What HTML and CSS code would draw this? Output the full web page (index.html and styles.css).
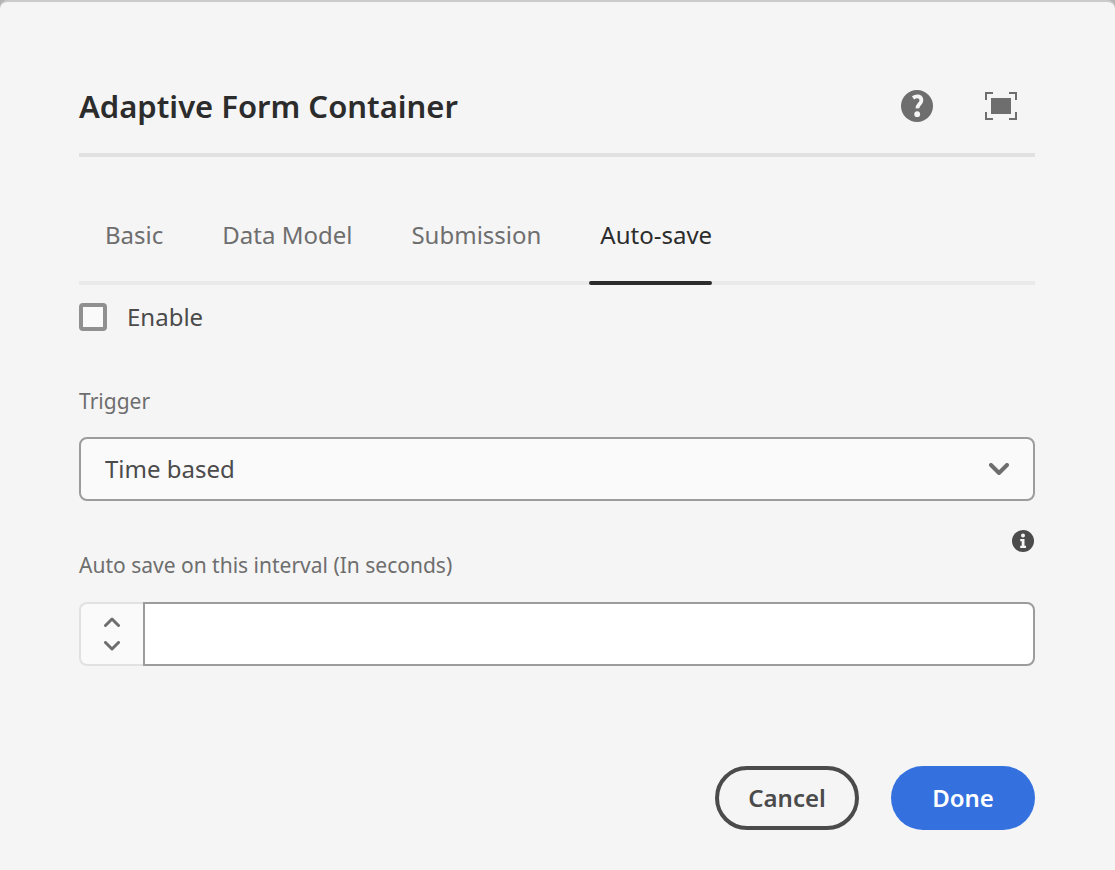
FILE: index.html
```html
<!DOCTYPE html>
<html lang="en">
<head>
<meta charset="utf-8">
<title>Adaptive Form Container</title>
<link rel="stylesheet" href="styles.css">
</head>
<body>
<form class="dialog">
  <header class="header">
    <h1 class="title">Adaptive Form Container</h1>
    <div class="actions">
      <button type="button" class="icon-button" aria-label="Help">
        <svg width="32" height="32" viewBox="0 0 32 32"><circle cx="16" cy="16" r="16" fill="#6e6e6e"/><path d="M12 7.800C13.200 7 14.600 6.400 16.200 6.400c2.900 0 4.200 1.600 4.200 3.800 0 1.900-1 3.100-2.300 4.300-1.300 1.300-1.700 2.200-1.600 3.900" fill="none" stroke="#f5f5f5" stroke-width="3.800"/><circle cx="16.200" cy="24.200" r="2.900" fill="#f5f5f5"/></svg>
      </button>
      <button type="button" class="icon-button" aria-label="Toggle fullscreen">
        <svg width="32" height="28" viewBox="0 0 32 28"><path d="M6 6h20v16H6z" fill="#6e6e6e"/><path d="M1 8V1h7M24 1h7v7M31 20v7h-7M8 27H1v-7" fill="none" stroke="#6e6e6e" stroke-width="2"/></svg>
      </button>
    </div>
  </header>

  <div class="tabs" role="tablist">
    <button type="button" class="tab" role="tab" aria-selected="false">Basic</button>
    <button type="button" class="tab" role="tab" aria-selected="false">Data Model</button>
    <button type="button" class="tab" role="tab" aria-selected="false">Submission</button>
    <button type="button" class="tab tab-selected" role="tab" aria-selected="true">Auto-save</button>
  </div>

  <div class="check">
    <input type="checkbox" class="checkbox" id="enable">
    <label for="enable">Enable</label>
  </div>

  <div class="field">
    <label class="label" for="trigger">Trigger</label>
    <div class="select-wrap">
      <select class="select" id="trigger"><option>Time based</option></select>
      <svg class="chevron" width="20" height="12" viewBox="0 0 20 12"><path d="M2 2l8 8 8-8" fill="none" stroke="#6e6e6e" stroke-width="4" stroke-linecap="round" stroke-linejoin="round"/></svg>
    </div>
  </div>

  <div class="field field-interval">
    <div class="label-row">
      <label class="label" for="interval">Auto save on this interval (In seconds)</label>
      <button type="button" class="icon-button" aria-label="More information">
        <svg width="22" height="22" viewBox="0 0 22 22"><circle cx="11" cy="11" r="11" fill="#4b4b4b"/><circle cx="11" cy="5.500" r="2" fill="#f5f5f5"/><path d="M8.200 9h4.300v6.700h1.500V18H8.200v-2.300h1.500v-4.400H8.200z" fill="#f5f5f5"/></svg>
      </button>
    </div>
    <div class="number">
      <div class="stepper">
        <button type="button" class="step" aria-label="Increment"><svg width="16" height="10" viewBox="0 0 16 10"><path d="M1.500 8.500L8 2l6.500 6.500" fill="none" stroke="#6e6e6e" stroke-width="3" stroke-linecap="round" stroke-linejoin="round"/></svg></button>
        <button type="button" class="step" aria-label="Decrement"><svg width="16" height="10" viewBox="0 0 16 10"><path d="M1.500 1.500L8 8l6.500-6.500" fill="none" stroke="#6e6e6e" stroke-width="3" stroke-linecap="round" stroke-linejoin="round"/></svg></button>
      </div>
      <input type="text" inputmode="numeric" class="number-input" id="interval">
    </div>
  </div>

  <footer class="footer">
    <button type="button" class="button button-secondary">Cancel</button>
    <button type="button" class="button button-primary">Done</button>
  </footer>
</form>
</body>
</html>
```
FILE: styles.css
```css
* { box-sizing: border-box; }

body {
  margin: 0;
  background: #b4b4b4;
  color: #4b4b4b;
  font: 24px/32px "Noto Sans", sans-serif;
}

button, input, select { font: inherit; color: inherit; }
button { padding: 0; border: 0; background: none; cursor: pointer; }
svg { display: block; }

.dialog {
  min-height: 100vh;
  padding: 80px 80px 40px 79px;
  border-top: 2px solid #cbcbcb;
  border-radius: 8px 8px 0 0;
  background: #f5f5f5;
}

.header {
  display: flex;
  align-items: center;
  justify-content: space-between;
  height: 75px;
  padding: 0 18px 23px 0;
  border-bottom: 4px solid #e1e1e1;
}
.title {
  margin: 0;
  color: #2c2c2c;
  font-size: 31px;
  line-height: 48px;
  font-weight: 600;
}
.actions { display: flex; align-items: center; gap: 52px; }
.icon-button { flex: none; }

.tabs {
  display: flex;
  gap: 59px;
  height: 128px;
  padding: 31px 26px 0;
  border-bottom: 4px solid #eaeaea;
}
.tab { position: relative; color: #6e6e6e; white-space: nowrap; }
.tab-selected { color: #2c2c2c; }
.tab-selected::after {
  content: "";
  position: absolute;
  right: 0;
  bottom: -4px;
  left: -11px;
  height: 4px;
  border-radius: 2px;
  background: #2c2c2c;
}

.check { display: flex; align-items: center; gap: 20px; margin-top: 16px; }
.checkbox {
  appearance: none;
  width: 28px;
  height: 28px;
  margin: 0;
  border: 4px solid #909090;
  border-radius: 4px;
  background: #fafafa;
}

.field { margin-top: 52px; }
.label { display: block; color: #6e6e6e; font-size: 21px; }
.select-wrap { position: relative; margin-top: 20px; }
.select {
  appearance: none;
  display: block;
  width: 100%;
  height: 64px;
  padding: 0 60px 0 24px;
  border: 2px solid #9c9c9c;
  border-radius: 8px;
  background: #fafafa;
}
.chevron { position: absolute; top: 26px; right: 26px; pointer-events: none; }

.field-interval { margin-top: 29px; }
.label-row { display: flex; align-items: flex-start; justify-content: space-between; padding-right: 1px; }
.label-row .label { padding-top: 19px; }
.number { display: flex; height: 64px; margin-top: 21px; }
.stepper {
  display: flex;
  flex-direction: column;
  align-items: center;
  justify-content: center;
  gap: 14px;
  width: 64px;
  border: 2px solid #e1e1e1;
  border-right: 0;
  border-radius: 8px 0 0 8px;
  background: #fafafa;
}
.number-input {
  flex: 1;
  min-width: 0;
  padding: 0 24px;
  border: 2px solid #9c9c9c;
  border-radius: 0 8px 8px 0;
  background: #fff;
}

.footer { display: flex; justify-content: flex-end; gap: 32px; margin-top: 100px; }
.button {
  min-width: 144px;
  height: 64px;
  padding: 0 28px;
  border-radius: 32px;
  font-weight: 600;
}
.button-secondary { border: 4px solid #4b4b4b; }
.button-primary { background: #3471df; color: #fff; }
```
